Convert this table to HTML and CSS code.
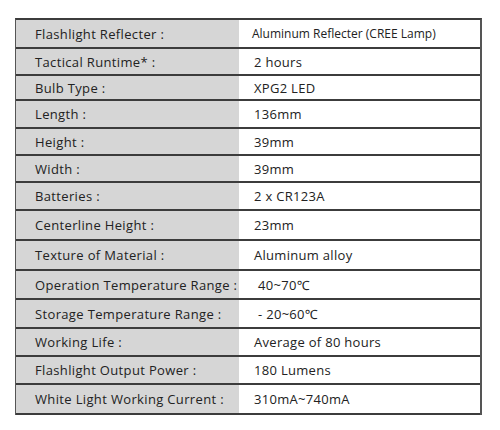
FILE: index.html
```html
<!DOCTYPE html>
<html>
<head>
<meta charset="utf-8">
<link rel="stylesheet" href="styles.css">
</head>
<body>
<div class="page">
  <div class="spec">
    <div class="row h29"><div class="k">Flashlight Reflecter :</div><div class="v v-small">Aluminum Reflecter (CREE Lamp)</div></div>
    <div class="row h27"><div class="k">Tactical Runtime* :</div><div class="v">2 hours</div></div>
    <div class="row h25"><div class="k">Bulb Type :</div><div class="v">XPG2 LED</div></div>
    <div class="row h28"><div class="k">Length :</div><div class="v">136mm</div></div>
    <div class="row h27"><div class="k">Height :</div><div class="v">39mm</div></div>
    <div class="row h27"><div class="k">Width :</div><div class="v">39mm</div></div>
    <div class="row h28"><div class="k">Batteries :</div><div class="v">2 x CR123A</div></div>
    <div class="row h30"><div class="k">Centerline Height :</div><div class="v">23mm</div></div>
    <div class="row h30"><div class="k">Texture of Material :</div><div class="v">Aluminum alloy</div></div>
    <div class="row h29"><div class="k">Operation Temperature Range :</div><div class="v v-indent">40~70℃</div></div>
    <div class="row h29"><div class="k">Storage Temperature Range :</div><div class="v v-indent">- 20~60℃</div></div>
    <div class="row h28"><div class="k">Working Life :</div><div class="v">Average of 80 hours</div></div>
    <div class="row h28"><div class="k">Flashlight Output Power :</div><div class="v">180 Lumens</div></div>
    <div class="row h30"><div class="k">White Light Working Current :</div><div class="v">310mA~740mA</div></div>
  </div>
</div>
</body>
</html>
```
FILE: styles.css
```css
html, body {
  margin: 0;
  padding: 0;
  background: #ffffff;
}
.page {
  padding: 18px 0 0 15px;
  font-family: "Open Sans", "Noto Sans", sans-serif;
  font-size: 13px;
  color: #222222;
}
.spec {
  width: 467px;
  box-sizing: border-box;
  border-top: 2px solid #3c3c3c;
  border-left: 1px solid #555555;
  border-right: 2px solid #555555;
  display: flex;
  flex-direction: column;
}
.row {
  display: grid;
  grid-template-columns: 223px 1fr;
  box-sizing: border-box;
  border-bottom: 2px solid #3c3c3c;
}
.h25 { height: 25px; }
.h27 { height: 27px; }
.h28 { height: 28px; }
.h29 { height: 29px; }
.h30 { height: 30px; }
.k {
  background: #d6d6d6;
  padding-left: 19px;
  display: flex;
  align-items: center;
  letter-spacing: 0.35px;
  white-space: nowrap;
}
.v {
  background: #ffffff;
  padding-left: 15px;
  display: flex;
  align-items: center;
  letter-spacing: 0.3px;
  white-space: nowrap;
}
.v-small {
  font-size: 12px;
  letter-spacing: 0;
  padding-left: 13px;
}
.v-indent {
  padding-left: 19px;
}
```
